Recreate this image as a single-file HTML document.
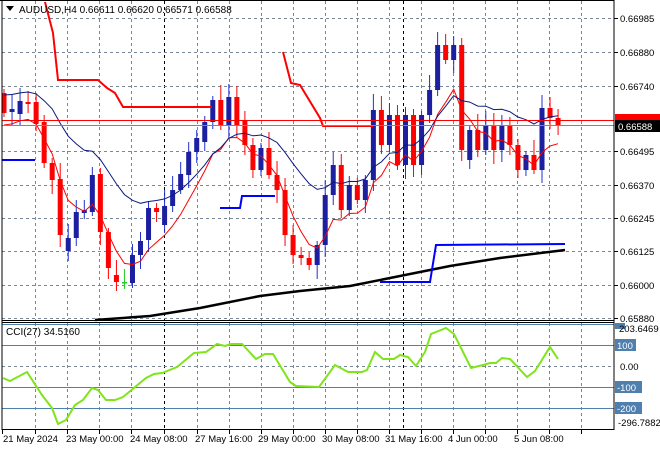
<!DOCTYPE html>
<html><head><meta charset="utf-8"><style>
body{margin:0;background:#fff;}
svg{display:block;font-family:"Liberation Sans",sans-serif;}
</style></head><body>
<svg id="s" width="660" height="450" xmlns="http://www.w3.org/2000/svg">
<rect width="660" height="450" fill="#fff"/>
<g id="grid"></g>
<g id="c"></g>
<g id="ln"></g>
<rect x="0" y="0" width="614" height="1" fill="#000"/>
<line x1="2" y1="0" x2="2" y2="430" stroke="#000"/>
<line x1="614" y1="0" x2="614" y2="430" stroke="#000"/>
<line x1="2" y1="320.5" x2="614" y2="320.5" stroke="#000"/>
<line x1="2" y1="322.5" x2="614" y2="322.5" stroke="#000"/>
<line x1="2" y1="429.5" x2="614" y2="429.5" stroke="#000"/>
<g id="ax" font-size="9.5" fill="#000"></g>
<path d="M6 6 L14 6 L10 11 Z" fill="#000"/>
<text x="19" y="13" font-size="10">AUDUSD,H4  0.66611 0.66620 0.66571 0.66588</text>
<text x="6" y="335" font-size="10">CCI(27) 34.5160</text>
</svg>
<script>
const NS="http://www.w3.org/2000/svg";
function el(p,t,a,txt){const e=document.createElementNS(NS,t);for(const k in a)e.setAttribute(k,a[k]);if(txt!==undefined)e.textContent=txt;document.getElementById(p).appendChild(e);return e;}
const vx=[35,67,99,131,197,229,261,293,325,357,389,421,453,485,517,549,581];
for(const x of vx){el("grid","line",{x1:x+.5,y1:1,x2:x+.5,y2:320,stroke:"#7a8797","stroke-dasharray":"3,3"});el("grid","line",{x1:x+.5,y1:323,x2:x+.5,y2:429,stroke:"#7a8797","stroke-dasharray":"3,3"});}
for(const x of [164,403]){el("grid","line",{x1:x+.5,y1:1,x2:x+.5,y2:320,stroke:"#000","stroke-dasharray":"3,3"});el("grid","line",{x1:x+.5,y1:323,x2:x+.5,y2:429,stroke:"#000","stroke-dasharray":"3,3"});}
const hy=[[18,"0.66985"],[52,"0.66880"],[86,"0.66740"],[151,"0.66495"],[185,"0.66370"],[218,"0.66245"],[251,"0.66125"],[285,"0.66000"],[318,"0.65880"]];
for(const [y,t] of hy){el("grid","line",{x1:2,y1:y+.5,x2:614,y2:y+.5,stroke:"#7a8797","stroke-dasharray":"3,3"});el("ax","line",{x1:614,y1:y+.5,x2:618,y2:y+.5,stroke:"#000"});el("ax","text",{x:620,y:y+4},t);}
el("grid","line",{x1:2,y1:366.5,x2:614,y2:366.5,stroke:"#7a8797","stroke-dasharray":"3,3"});
for(const y of [324,345,387,408])el("grid","line",{x1:2,y1:y+.5,x2:614,y2:y+.5,stroke:"#4f7fae"});
const C=[[93,113],[112,109],[114,101],[102,104],[102,124],[122,163],[163,180],[179,235],[251,238],[238,212],[213,210],[212,175],[174,232],[232,268],[275,282],[282,282],[283,255],[255,241],[240,208],[208,212],[225,206],[206,190],[190,174],[175,152],[152,138],[142,122],[122,100],[100,125],[125,97],[97,125],[120,145],[145,170],[170,148],[148,175],[175,190],[190,235],[235,255],[255,258],[258,265],[265,245],[245,195],[195,165],[165,210],[210,185],[185,200],[200,180],[180,110],[110,145],[145,115],[115,165],[165,115],[115,165],[165,115],[115,90],[90,45],[45,60],[60,45],[45,150],[160,130],[130,150],[150,125],[125,150],[150,125],[125,145],[145,170],[170,155],[155,170],[170,108],[108,118],[118,126]];
const xs=[];
C.forEach((c,i)=>{const x=4+i*8.03;xs.push(x);const [o,cl]=c;const up=cl<o;const col=o==cl?"#2c2":(up?"#1b1fa0":"#f00");
const w1=4+((i*37)%13),w2=4+((i*53)%11);
el("c","line",{x1:x,y1:Math.min(o,cl)-w1,x2:x,y2:Math.max(o,cl)+w2,stroke:col==="#1b1fa0"?"#2030d0":col});
el("c","rect",{x:x-2.5,y:Math.min(o,cl),width:5,height:Math.max(1.5,Math.abs(o-cl)),fill:col});});
function ema(p){let r=[],v=C[0][1];C.forEach((c,i)=>{v=v+(c[1]-v)*2/(p+1);r.push(v);});return r;}
const r=ema(6),b=ema(14);
el("ln","polyline",{points:xs.map((x,i)=>x+","+(r[i]+12).toFixed(1)).join(" "),fill:"none",stroke:"#f00","stroke-width":1});
el("ln","polyline",{points:xs.map((x,i)=>x+","+(b[i]-18).toFixed(1)).join(" "),fill:"none",stroke:"#0a1a80","stroke-width":1});
el("ln","polyline",{points:"95,320 150,316 200,308 260,296 300,291 350,286 400,276 450,266 500,258 565,250",fill:"none",stroke:"#000","stroke-width":2.5});
el("ln","polyline",{points:"45,2 53,33 58,80 98,80 107,88 115,93 123,107 212,107",fill:"none",stroke:"#f00","stroke-width":2});
el("ln","polyline",{points:"283,52 291,83 300,85 320,118 323,126 373,126",fill:"none",stroke:"#f00","stroke-width":2});
el("ln","polyline",{points:"2,160 35,160",fill:"none",stroke:"#0000ff","stroke-width":2});
el("ln","polyline",{points:"220,208 240,208 242,196 275,196",fill:"none",stroke:"#0000ff","stroke-width":2});
el("ln","polyline",{points:"380,282 430,282 436,245 565,244",fill:"none",stroke:"#0000ff","stroke-width":2});
el("ln","line",{x1:2,y1:120.5,x2:614,y2:120.5,stroke:"#f00"});
el("ln","line",{x1:2,y1:125.5,x2:614,y2:125.5,stroke:"#7a8797"});
el("ln","polyline",{points:"3,378 10,381 27,372 42,395 52,408 58,424 66,420 75,405 83,400 92,388 98,390 106,400 115,400 123,397 146,378 154,374 162,373 177,367 194,353 206,352 217,344 225,346 231,344 242,344 256,359 265,354 273,354 290,382 296,386 319,387 335,365 348,372 362,372 367,370 375,352 383,359 394,359 400,355 408,357 416,366 425,352 431,334 446,328 454,334 471,368 483,365 490,363 496,363 502,358 510,359 527,377 535,371 550,347 558,359",fill:"none",stroke:"#7fe51a","stroke-width":2});
el("ax","rect",{x:615,y:114,width:45,height:7,fill:"#f00"});
el("ax","rect",{x:615,y:120,width:45,height:12,fill:"#000"});
el("ax","text",{x:618,y:130,fill:"#fff"},"0.66588");
el("ax","rect",{x:615,y:323,width:10,height:6,fill:"#4f7fae"});
el("ax","text",{x:619,y:332},"203.6469");
for(const [y,t] of [[345,"100"],[387,"-100"],[408,"-200"]]){el("ax","rect",{x:615,y:y-6,width:t.length*6+3,height:12,fill:"#4f7fae"});el("ax","text",{x:617,y:y+4,fill:"#fff"},t);}
el("ax","text",{x:620,y:370},"0.00");
el("ax","text",{x:618,y:426},"-296.7882");
const dl=[[3,"21 May 2024"],[66,"23 May 00:00"],[130,"24 May 08:00"],[195,"27 May 16:00"],[258,"29 May 00:00"],[322,"30 May 08:00"],[385,"31 May 16:00"],[448,"4 Jun 00:00"],[514,"5 Jun 08:00"]];
const tx=[2,35,67,99,131,164,197,229,261,293,325,357,389,421,453,485,517,549,581];
for(const x of tx)el("ax","line",{x1:x+.5,y1:430,x2:x+.5,y2:434,stroke:"#000"});
for(const [x,t] of dl)el("ax","text",{x:x,y:442},t);
</script>
</body></html>
